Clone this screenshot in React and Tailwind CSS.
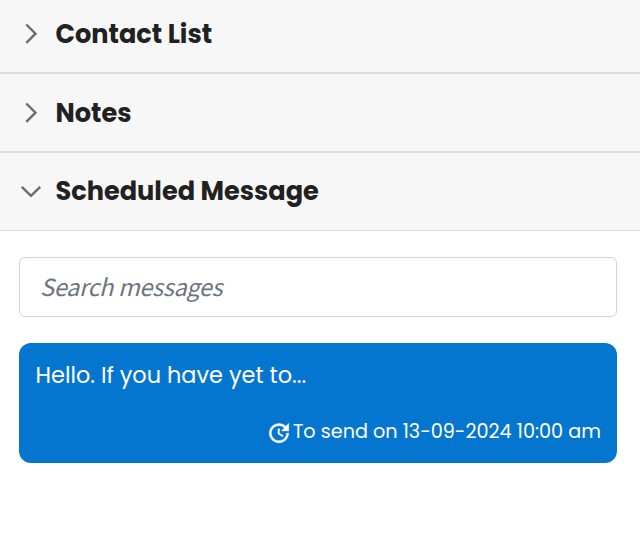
const sections = [
  { title: 'Contact List', box: 'h-[74px] border-b-2 pb-1', open: false },
  { title: 'Notes', box: 'h-[79px] border-b-2', open: false },
  { title: 'Scheduled Message', box: 'h-[78px] border-b pb-[2px]', open: true },
];

function Chevron({ open }) {
  return (
    <svg className="h-6 w-6 shrink-0" viewBox="0 0 24 24" fill="none" stroke="#6c6c6c" strokeWidth="2.4">
      <path d={open ? 'M2.8 7.8 12 16.8l9.2-9' : 'M7.3 2.5 16.5 11.7l-9.2 9.2'} />
    </svg>
  );
}

function UpdateIcon() {
  return (
    <svg className="mt-px h-[26px] w-[26px] shrink-0" viewBox="0 0 24 24" fill="white" stroke="white" strokeWidth="0.3">
      <path d="M21 10.12h-6.78l2.74-2.82c-2.73-2.7-7.15-2.8-9.88-.1-2.73 2.71-2.73 7.08 0 9.79s7.15 2.71 9.88 0C18.32 15.65 19 14.08 19 12.1h2c0 1.98-.88 4.55-2.64 6.29-3.51 3.48-9.21 3.48-12.72 0-3.5-3.47-3.53-9.11-.02-12.58s9.14-3.47 12.65 0L21 3v7.12zM12.5 8v4.25l3.5 2.08-.72 1.21L11 13V8h1.5z" />
    </svg>
  );
}

export default function App() {
  return (
    <main className="h-[536px] w-[640px] overflow-hidden bg-white font-['Poppins','Inter',sans-serif]">
      {sections.map((s) => (
        <div key={s.title} className={`flex items-center border-[#dedede] bg-[#f7f7f7] pl-[18.5px] ${s.box}`}>
          <Chevron open={s.open} />
          <h2 className="ml-[13px] text-[25.6px] leading-9 font-bold whitespace-nowrap text-[#212121]">{s.title}</h2>
        </div>
      ))}
      <section className="flex flex-col gap-[26px] pt-[26px] pr-[23px] pl-[19px]">
        <input
          type="text"
          placeholder="Search messages"
          className="h-[60px] w-full rounded-md border border-[#ced4da] bg-white px-5 pb-[2px] font-['Noto_Sans_CJK_SC',sans-serif] text-[23.5px] tracking-[-0.33px] text-[#6c757d] italic outline-none placeholder:text-[#6c757d]"
        />
        <article className="flex h-[120px] flex-col justify-between rounded-xl bg-[#0576d0] py-4 pr-4 pl-[16.5px] text-white">
          <p className="text-[22.4px] leading-8 whitespace-nowrap">Hello. If you have yet to...</p>
          <div className="flex items-center justify-end gap-px">
            <UpdateIcon />
            <span className="text-[19.2px] leading-[30px] whitespace-nowrap">To send on 13-09-2024 10:00 am</span>
          </div>
        </article>
      </section>
    </main>
  );
}
